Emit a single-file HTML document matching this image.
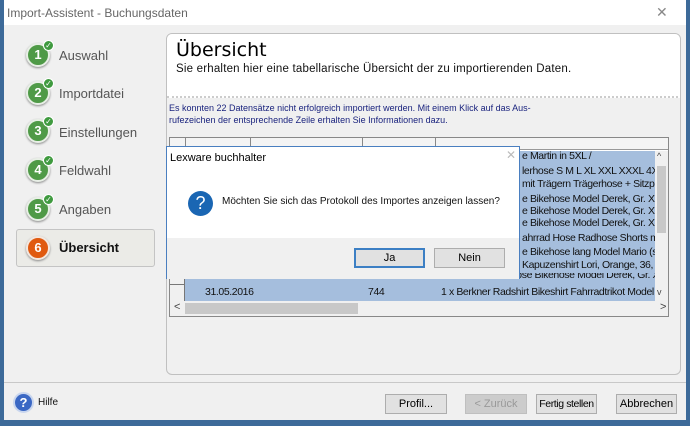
<!DOCTYPE html><html><head><style>
*{box-sizing:border-box;margin:0;padding:0}
body{width:690px;height:426px;overflow:hidden;background:#3d6a99;font-family:"Liberation Sans",sans-serif;position:relative}
.a{position:absolute}
.win{left:4px;top:0;width:682px;height:420px;background:#f0f0f0}
.tb{left:0;top:0;width:682px;height:25px;background:#fff;font-size:12px;color:#666;padding:6px 0 0 3px}
.step{font-size:13px;color:#555;font-family:"Liberation Sans",sans-serif}
.c{width:24px;height:24px;border-radius:50%;background:#4f9a47;border:2px solid #e8efe6;box-shadow:0 1px 2px #888;color:#fff;font-weight:bold;font-size:13px;text-align:center;line-height:20px}
.ck{width:11px;height:11px;border-radius:50%;background:#3f9a3f;border:1px solid #fff;color:#fff;font-size:8px;line-height:9px;text-align:center}
.btn{height:20px;border:1px solid #adadad;background:#e1e1e1;font-size:11px;text-align:center;line-height:18px;color:#000;white-space:nowrap}
.row{left:185px;width:470px;height:13px;font-size:10.5px;letter-spacing:-0.4px;color:#111;white-space:nowrap;overflow:hidden}
</style></head><body>
<div class="a win">
<div class="a tb">Import-Assistent - Buchungsdaten<span class="a" style="left:652px;top:4px;font-size:14px;color:#888">✕</span></div>
</div>
<div class="a c" style="left:26px;top:43px">1</div><div class="a ck" style="left:43px;top:40px">✓</div><div class="a step" style="left:59px;top:48px">Auswahl</div>
<div class="a c" style="left:26px;top:81px">2</div><div class="a ck" style="left:43px;top:78px">✓</div><div class="a step" style="left:59px;top:86px">Importdatei</div>
<div class="a c" style="left:26px;top:119px">3</div><div class="a ck" style="left:43px;top:116px">✓</div><div class="a step" style="left:59px;top:125px">Einstellungen</div>
<div class="a c" style="left:26px;top:158px">4</div><div class="a ck" style="left:43px;top:155px">✓</div><div class="a step" style="left:59px;top:163px">Feldwahl</div>
<div class="a c" style="left:26px;top:197px">5</div><div class="a ck" style="left:43px;top:194px">✓</div><div class="a step" style="left:59px;top:202px">Angaben</div>
<div class="a" style="left:16px;top:229px;width:139px;height:38px;border:1px solid #c4c4c4;border-radius:3px;background:#ebebe7"></div>
<div class="a c" style="left:26px;top:236px;background:#e05a10;border-color:#f3e8e0">6</div><div class="a step" style="left:59px;top:240px;color:#111;font-weight:bold">Übersicht</div>
<div class="a" style="left:166px;top:33px;width:515px;height:342px;border:1px solid #c0c0c0;border-radius:6px;background:#f0f0f0;overflow:hidden">
<div class="a" style="left:0;top:0;width:515px;height:64px;background:#fff;border-bottom:2px dotted #ccc"></div>
<div class="a" style="left:9px;top:5px;font-size:19px;font-family:'DejaVu Sans',sans-serif;color:#000">Übersicht</div>
<div class="a" style="left:9px;top:29px;font-size:11.5px;color:#111;letter-spacing:0.2px">Sie erhalten hier eine tabellarische Übersicht der zu importierenden Daten.</div>
<div class="a" style="left:2px;top:68px;font-size:9px;color:#1a237e;line-height:12px">Es konnten 22 Datensätze nicht erfolgreich importiert werden. Mit einem Klick auf das Aus-<br>rufezeichen der entsprechende Zeile erhalten Sie Informationen dazu.</div>
</div>
<div class="a" style="left:169px;top:137px;width:500px;height:180px;background:#fff;border:1px solid #888"></div>
<div class="a" style="left:170px;top:138px;width:498px;height:12px;background:#f4f4f4;border-bottom:1px solid #999"></div>
<div class="a" style="left:185px;top:138px;width:1px;height:12px;background:#888"></div>
<div class="a" style="left:250px;top:138px;width:1px;height:12px;background:#888"></div>
<div class="a" style="left:362px;top:138px;width:1px;height:12px;background:#888"></div>
<div class="a" style="left:435px;top:138px;width:1px;height:12px;background:#888"></div>
<div class="a" style="left:185px;top:151px;width:470px;height:150px;background:#a5bedd"></div>
<div class="a" style="left:170px;top:151px;width:15px;height:150px;background:#f0f0f0;border-right:1px solid #777"></div>
<div class="a" style="left:170px;top:272px;width:15px;height:13px;border-top:1px solid #777;border-bottom:1px solid #777"></div>
<div class="a row" style="top:150px;padding-left:337px">e Martin in 5XL /</div>
<div class="a row" style="top:165px;padding-left:337px">lerhose S M L XL XXL XXXL 4XL</div>
<div class="a row" style="top:178px;padding-left:337px">mit Trägern Trägerhose + Sitzpo</div>
<div class="a row" style="top:193px;padding-left:337px">e Bikehose Model Derek, Gr. XL,</div>
<div class="a row" style="top:205px;padding-left:337px">e Bikehose Model Derek, Gr. XL,</div>
<div class="a row" style="top:217px;padding-left:337px">e Bikehose Model Derek, Gr. XXX</div>
<div class="a row" style="top:232px;padding-left:337px">ahrrad Hose Radhose Shorts mit</div>
<div class="a row" style="top:246px;padding-left:337px">e Bikehose lang Model Mario (sch</div>
<div class="a row" style="top:259px;padding-left:337px">Kapuzenshirt Lori, Orange, 36, 3</div>
<div class="a row" style="top:273px"><span class="a" style="left:20px;top:-4px">31.05.2016</span><span class="a" style="left:183px;top:-4px">743</span><span class="a" style="left:256px;top:-4px">1 x Berkner Radhose Bikehose Model Derek, Gr. XXX</span></div>
<div class="a row" style="top:286px"><span class="a" style="left:20px">31.05.2016</span><span class="a" style="left:183px">744</span><span class="a" style="left:256px">1 x Berkner Radshirt Bikeshirt Fahrradtrikot Model Nat</span></div>
<div class="a" style="left:655px;top:151px;width:13px;height:150px;background:#f0f0f0"><div class="a" style="left:2px;top:15px;width:9px;height:67px;background:#c8c8c8"></div><div class="a" style="left:2px;top:0;font-size:9px;color:#444">^</div><div class="a" style="left:2px;top:136px;font-size:9px;color:#444">v</div></div>
<div class="a" style="left:170px;top:301px;width:498px;height:15px;background:#f0f0f0"><div class="a" style="left:15px;top:2px;width:173px;height:11px;background:#c8c8c8"></div><div class="a" style="left:4px;top:0;font-size:11px;color:#444">&lt;</div><div class="a" style="left:490px;top:0;font-size:11px;color:#444">&gt;</div></div>
<div class="a" style="left:166px;top:146px;width:354px;height:133px;background:#fff;border:1px solid #4a7fc0">
<div class="a" style="left:3px;top:5px;font-size:11px;color:#000">Lexware buchhalter</div>
<div class="a" style="left:339px;top:1px;font-size:12px;color:#bbb">✕</div>
<div class="a" style="left:21px;top:44px;width:25px;height:25px;border-radius:50%;background:#1a66b3;color:#fff;text-align:center;font-size:18px;line-height:25px">?</div>
<div class="a" style="left:55px;top:49px;font-size:10px;color:#111;white-space:nowrap">Möchten Sie sich das Protokoll des Importes anzeigen lassen?</div>
<div class="a" style="left:0;top:91px;width:352px;height:41px;background:#f0f0f0"></div>
<div class="a btn" style="left:187px;top:101px;width:71px;border:2px solid #3c7fc4;line-height:16px">Ja</div>
<div class="a btn" style="left:267px;top:101px;width:71px">Nein</div>
</div>
<div class="a" style="left:4px;top:382px;width:682px;height:1px;background:#c8c8c8"></div>
<div class="a" style="left:13px;top:392px;width:21px;height:21px;border-radius:50%;background:#3b68c4;border:2px solid #c9d6ee;color:#fff;font-weight:bold;text-align:center;font-size:13px;line-height:17px">?</div>
<div class="a" style="left:38px;top:397px;font-size:10px;color:#111">Hilfe</div>
<div class="a btn" style="left:385px;top:394px;width:62px">Profil...</div>
<div class="a btn" style="left:465px;top:394px;width:62px;color:#999;background:#ccc;border-color:#bfbfbf">&lt; Zurück</div>
<div class="a btn" style="left:536px;top:394px;width:61px;font-size:10.5px;letter-spacing:-0.4px">Fertig stellen</div>
<div class="a btn" style="left:616px;top:394px;width:61px">Abbrechen</div>
</body></html>
